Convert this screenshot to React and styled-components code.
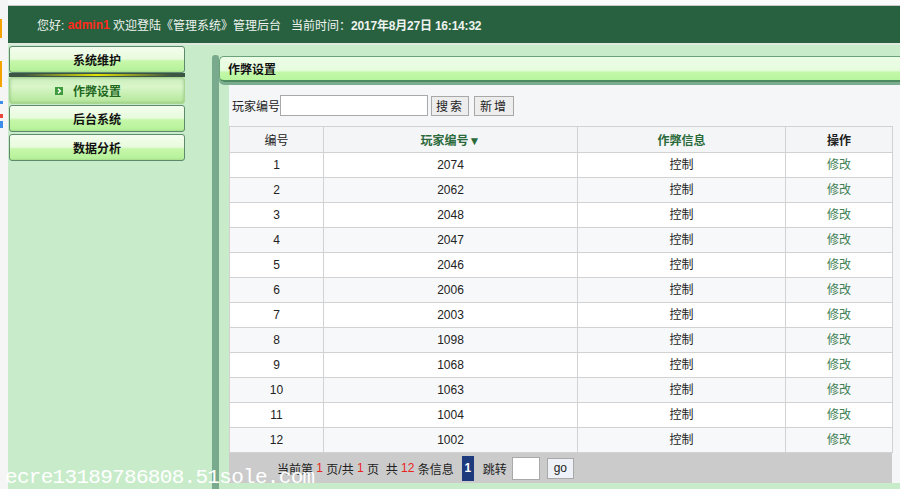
import React from "react";
import styled, { createGlobalStyle } from "styled-components";

const GlobalStyle = createGlobalStyle`
  html, body {
    margin: 0;
    padding: 0;
    height: 100%;
  }
  body {
    font-family: "Liberation Sans", "Noto Sans CJK SC", sans-serif;
    font-size: 12px;
    color: #222;
  }
  #root {
    height: 100%;
  }
`;

const Page = styled.div`
  display: flex;
  height: 100vh;
  position: relative;
  overflow: hidden;
  background: #f4f5f4;
`;

const EdgeStrip = styled.div`
  width: 8px;
  flex-shrink: 0;
  display: flex;
  flex-direction: column;
  padding-top: 19px;
`;

const EdgeMark = styled.span`
  display: block;
  width: ${(p) => p.$w || 2}px;
  height: ${(p) => p.$h}px;
  margin-bottom: ${(p) => p.$mb || 0}px;
  background: ${(p) => p.$c};
`;

const Main = styled.div`
  flex: 1;
  display: flex;
  flex-direction: column;
`;

const TopGap = styled.div`
  flex-shrink: 0;
  height: 5px;
  background: #fbfbfb;
  border-bottom: 1px solid #c9c9c9;
`;

const Header = styled.div`
  flex-shrink: 0;
  height: 37px;
  background: #27613f;
  display: flex;
  align-items: center;
  padding-left: 29px;
  color: #eef3ef;
  font-size: 12px;
  white-space: pre;
`;

const UserName = styled.span`
  color: #ff2a1a;
  font-weight: bold;
`;

const TimeLabel = styled.span`
  margin-left: 10px;
`;

const TimeValue = styled.span`
  font-weight: bold;
  letter-spacing: -0.2px;
`;

const HeaderLine = styled.div`
  flex-shrink: 0;
  height: 2px;
  background: #dfe9e0;
`;

const Body = styled.div`
  flex: 1;
  display: flex;
  background: #c8ecca;
  padding-left: 1px;
`;

const Sidebar = styled.div`
  width: 176px;
  flex-shrink: 0;
  padding-top: 1px;
  display: flex;
  flex-direction: column;
`;

const MenuItem = styled.div`
  flex-shrink: 0;
  height: 27px;
  box-sizing: border-box;
  border: 1px solid #5d8a6c;
  border-radius: 3px;
  margin-bottom: ${(p) => p.$mb || 0}px;
  background: linear-gradient(
    to bottom,
    #f3fdee 0%,
    #e8fbdc 48%,
    #c6f7aa 56%,
    #b7f29b 92%,
    #a6dd8c 100%
  );
  display: flex;
  align-items: center;
  justify-content: center;
  font-weight: bold;
  font-size: 12px;
  color: #111;
`;

const ActiveItem = styled(MenuItem)`
  border-color: #a9d692;
  background: linear-gradient(to bottom, #cdeebd 0%, #d9f6c9 35%, #c4eeae 70%, #b5e69b 100%);
  box-shadow: inset 0 0 3px rgba(80, 140, 70, 0.45);
  color: #23681f;
`;

const Separator = styled.div`
  flex-shrink: 0;
  height: 4px;
  background: linear-gradient(90deg, rgba(230, 230, 0, 0) 8%, rgba(235, 235, 0, 0.95) 50%, rgba(230, 230, 0, 0) 92%)
      center / 100% 2px no-repeat,
    #3c5444;
`;

const ArrowIcon = styled.svg`
  width: 8px;
  height: 8px;
  margin-left: -18px;
  margin-right: 10px;
`;

const DarkBar = styled.div`
  width: 7px;
  flex-shrink: 0;
  margin-left: 27px;
  margin-top: 10px;
  background: #7aaa8d;
  border-radius: 3px 3px 0 0;
`;

const Panel = styled.div`
  flex: 1;
  margin-top: 11px;
  display: flex;
  flex-direction: column;
`;

const Tab = styled.div`
  flex-shrink: 0;
  height: 23px;
  border-top: 1px solid #6aa37b;
  border-left: 1px solid #6aa37b;
  border-bottom: 2px solid #4e8a5f;
  border-radius: 5px 0 0 5px;
  box-shadow: 0 3px 0 #7cac8f;
  margin-bottom: 3px;
  background: linear-gradient(
    to bottom,
    #ecfde6 0%,
    #e6fcde 58%,
    #c3f8a9 66%,
    #b8f59d 100%
  );
  display: flex;
  align-items: center;
  padding-left: 8px;
  font-weight: bold;
  font-size: 12px;
  color: #111;
`;

const ContentRow = styled.div`
  display: flex;
  padding-left: 10px;
`;

const Content = styled.div`
  flex: 1;
  background: #f5f6f8;
  padding-top: 10px;
`;

const SearchRow = styled.div`
  display: flex;
  align-items: center;
  height: 21px;
  padding-left: 3px;
  margin-bottom: 10px;
`;

const TextInput = styled.input`
  box-sizing: border-box;
  width: ${(p) => p.$w}px;
  height: ${(p) => p.$h}px;
  margin: 0 0 0 ${(p) => p.$ml || 0}px;
  border: 1px solid #a9a9a9;
  background: #fff;
  padding: 0 2px;
`;

const Button = styled.button`
  box-sizing: border-box;
  width: ${(p) => p.$w}px;
  height: ${(p) => p.$h || 20}px;
  margin-left: ${(p) => p.$ml || 0}px;
  padding: 0;
  border: 1px solid #a8a8a8;
  background: ${(p) => p.$bg || "#ededed"};
  font-family: "Liberation Sans", "Noto Sans CJK SC", sans-serif;
  font-size: 12px;
  letter-spacing: ${(p) => p.$ls || 0}px;
  color: #222;
`;

const Table = styled.table`
  width: 663px;
  border-collapse: collapse;
  table-layout: fixed;
  border: 1px solid #d2d2d2;
`;

const Th = styled.th`
  height: 25px;
  padding: 0;
  border: 1px solid #d2d2d2;
  background: #f4f5f7;
  font-size: 12px;
  font-weight: ${(p) => (p.$bold ? "bold" : "normal")};
  color: ${(p) => p.$color || "#222"};
`;

const Tr = styled.tr`
  background: ${(p) => (p.$even ? "#f7f8fa" : "#ffffff")};
`;

const Td = styled.td`
  height: 24px;
  padding: 0;
  border: 1px solid #d2d2d2;
  text-align: center;
  vertical-align: middle;
  font-size: 12px;
  line-height: 20px;
  color: ${(p) => p.$color || "#222"};
`;

const Pager = styled.div`
  width: 663px;
  height: 30px;
  background: #cbcbcb;
  display: flex;
  align-items: center;
  padding-left: 48px;
  box-sizing: border-box;
  font-size: 12px;
  color: #222;
  white-space: pre;
`;

const Red = styled.span`
  color: #e8221c;
`;

const PageBox = styled.span`
  width: 12px;
  height: 25px;
  margin-left: 8px;
  background: #1d3a7c;
  color: #fff;
  font-weight: bold;
  display: flex;
  align-items: center;
  justify-content: center;
`;

const JumpLabel = styled.span`
  margin-left: 9px;
`;

const Watermark = styled.div`
  position: absolute;
  left: 5px;
  bottom: 0;
  font-family: "Liberation Mono", monospace;
  font-size: 21px;
  letter-spacing: -0.7px;
  color: #fff;
  pointer-events: none;
`;

const players = [2074, 2062, 2048, 2047, 2046, 2006, 2003, 1098, 1068, 1063, 1004, 1002];

const App = () => {
  return (
    <>
      <GlobalStyle />
      <Page>
        <EdgeStrip>
          <EdgeMark $c="#f5a300" $h={19} $mb={23} />
          <EdgeMark $c="#f5a300" $h={26} $mb={14} />
          <EdgeMark $c="#3d8ee8" $w={3} $h={3} $mb={10} />
          <EdgeMark $c="#e8453c" $w={3} $h={4} $mb={3} />
          <EdgeMark $c="#3d8ee8" $w={3} $h={7} />
        </EdgeStrip>
        <Main>
          <TopGap />
          <Header>
            您好: <UserName>admin1</UserName> 欢迎登陆《管理系统》管理后台
            <TimeLabel>当前时间：</TimeLabel>
            <TimeValue>2017年8月27日 16:14:32</TimeValue>
          </Header>
          <HeaderLine />
          <Body>
            <Sidebar>
              <MenuItem>系统维护</MenuItem>
              <Separator />
              <ActiveItem $mb={1}>
                <ArrowIcon viewBox="0 0 8 8">
                  <rect x="0" y="0" width="8" height="8" fill="#3f9a3d" />
                  <path d="M3 1.8 L5.3 4 L3 6.2" stroke="#fff" strokeWidth="1.5" fill="none" />
                </ArrowIcon>
                作弊设置
              </ActiveItem>
              <MenuItem $mb={2}>后台系统</MenuItem>
              <MenuItem>数据分析</MenuItem>
            </Sidebar>
            <DarkBar />
            <Panel>
              <Tab>作弊设置</Tab>
              <ContentRow>
                <Content>
                  <SearchRow>
                    玩家编号
                    <TextInput $w={148} $h={21} />
                    <Button $w={38} $ml={3} $ls={2}>
                      搜索
                    </Button>
                    <Button $w={40} $ml={5} $ls={2}>
                      新增
                    </Button>
                  </SearchRow>
                  <Table>
                    <colgroup>
                      <col style={{ width: 94 }} />
                      <col style={{ width: 254 }} />
                      <col style={{ width: 208 }} />
                      <col style={{ width: 107 }} />
                    </colgroup>
                    <thead>
                      <tr>
                        <Th>编号</Th>
                        <Th $bold $color="#2b6a3b">
                          玩家编号▼
                        </Th>
                        <Th $bold $color="#2b6a3b">
                          作弊信息
                        </Th>
                        <Th $bold>操作</Th>
                      </tr>
                    </thead>
                    <tbody>
                      {players.map((p, i) => (
                        <Tr key={p} $even={i % 2 === 1}>
                          <Td>{i + 1}</Td>
                          <Td>{p}</Td>
                          <Td>控制</Td>
                          <Td $color="#3e7f55">修改</Td>
                        </Tr>
                      ))}
                    </tbody>
                  </Table>
                  <Pager>
                    当前第 <Red>1</Red> 页/共 <Red>1</Red> 页{"  "}共 <Red>12</Red> 条信息
                    <PageBox>1</PageBox>
                    <JumpLabel>跳转</JumpLabel>
                    <TextInput $w={28} $h={23} $ml={5} />
                    <Button $w={27} $h={21} $ml={7} $bg="#eef2f8">
                      go
                    </Button>
                  </Pager>
                </Content>
              </ContentRow>
            </Panel>
          </Body>
        </Main>
        <Watermark>ecre13189786808.51sole.com</Watermark>
      </Page>
    </>
  );
};

export default App;
